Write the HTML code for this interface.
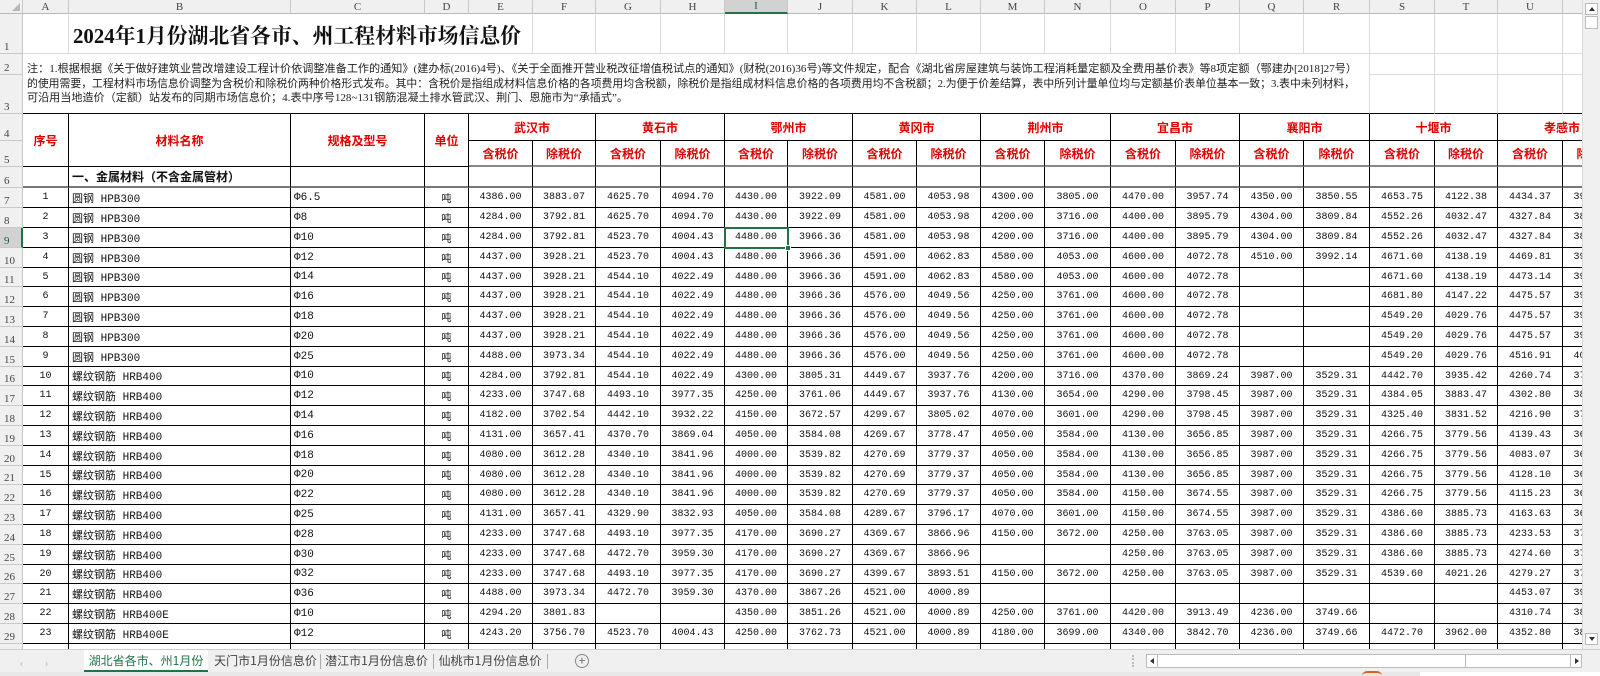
<!DOCTYPE html>
<html><head><meta charset="utf-8"><style>
*{margin:0;padding:0;box-sizing:border-box}
body{width:1600px;height:676px;overflow:hidden;background:#fff;position:relative;font-family:"Liberation Mono","Noto Sans CJK SC",monospace}
#grid{position:absolute;left:0;top:0;width:1582px;height:649px;overflow:hidden}
table{border-collapse:separate;border-spacing:0;table-layout:fixed;width:1627px}
td{border-right:1px solid #000;border-bottom:1px solid #000;font-size:10px;text-align:center;white-space:nowrap;overflow:hidden;color:#111;padding:0;vertical-align:middle}
td.h{background:#f0f0f0;border-right:1px solid #c8c8c8;border-bottom:1px solid #c8c8c8;color:#444;font-family:"Liberation Serif","Noto Serif CJK SC",serif;font-size:11px;vertical-align:bottom;text-align:left;padding-left:4px}
tr.ch td{background:#f0f0f0;border-right:1px solid #c8c8c8;border-bottom:1px solid #b8b8b8;color:#444;font-family:"Liberation Serif",serif;font-size:11px;text-align:center;vertical-align:middle;padding:0}
tr.ch td.sel{background:#d2d2d2;color:#1e5e36;border-bottom:2px solid #217346}
td.hs{background:#d2d2d2;color:#1e5e36;border-right:2px solid #217346}
tr.g td{border-right:1px solid #dadada;border-bottom:1px solid #dadada}
tr.g3 td{border-bottom:1px solid #000}
tr.g3 td.h{border-bottom:1px solid #c8c8c8}
tr.g td.h{border-right:1px solid #c8c8c8;border-bottom:1px solid #c8c8c8}
td.rd{color:#e00000;font-weight:bold;font-size:12px;font-family:"Noto Sans CJK SC",sans-serif}
td.l{text-align:left;padding-left:3px;font-size:11px}
tr.s6 td{border-bottom:2px solid #777}
tr.s5 td{border-bottom:2px solid #888}
tr.s5 td.h,tr.s6 td.h{border-bottom:1px solid #c8c8c8}
#vs{position:absolute;left:1582px;top:0;width:18px;height:649px;background:#f0f0f0;border-left:1px solid #d8d8d8}
#tabs{position:absolute;left:0;top:649px;width:1600px;height:23px;background:#f0f0f0;border-top:1px solid #cfcfcf;font-family:"Noto Sans CJK SC",sans-serif;font-size:12px;color:#444}
.tab{position:absolute;top:0;height:22px;line-height:21px;text-align:center}
.sep{position:absolute;top:4px;width:1px;height:15px;background:#aaa}
</style></head><body>
<div id="grid">
<table>
<colgroup><col style="width:23px"><col style="width:46px"><col style="width:222px"><col style="width:134px"><col style="width:44px"><col style="width:64px"><col style="width:63px"><col style="width:65px"><col style="width:64px"><col style="width:63px"><col style="width:65px"><col style="width:64px"><col style="width:64px"><col style="width:64px"><col style="width:66px"><col style="width:65px"><col style="width:64px"><col style="width:64px"><col style="width:66px"><col style="width:65px"><col style="width:63px"><col style="width:65px"><col style="width:64px"></colgroup>
<tr class="ch" style="height:14px"><td style="position:relative"><span style="position:absolute;right:2px;bottom:2px;width:0;height:0;border-left:8px solid transparent;border-bottom:8px solid #b8b8b8"></span></td><td>A</td><td>B</td><td>C</td><td>D</td><td>E</td><td>F</td><td>G</td><td>H</td><td class="sel">I</td><td>J</td><td>K</td><td>L</td><td>M</td><td>N</td><td>O</td><td>P</td><td>Q</td><td>R</td><td>S</td><td>T</td><td>U</td><td>V</td></tr>
<tr class="g" style="height:40px"><td class="h">1</td><td></td><td colspan="4"></td><td></td><td></td><td></td><td></td><td></td><td></td><td></td><td></td><td></td><td></td><td></td><td></td><td></td><td></td><td></td><td></td><td></td></tr>
<tr class="g" style="height:21px"><td class="h">2</td><td colspan="18" rowspan="2" style="border-bottom:1px solid #000"></td><td></td><td></td><td></td><td></td></tr>
<tr class="g g3" style="height:39px"><td class="h">3</td><td></td><td></td><td></td><td></td></tr>
<tr style="height:27px"><td class="h">4</td><td class="rd" rowspan="2">序号</td><td class="rd" rowspan="2">材料名称</td><td class="rd" rowspan="2">规格及型号</td><td class="rd" rowspan="2">单位</td><td class="rd" colspan="2">武汉市</td><td class="rd" colspan="2">黄石市</td><td class="rd" colspan="2">鄂州市</td><td class="rd" colspan="2">黄冈市</td><td class="rd" colspan="2">荆州市</td><td class="rd" colspan="2">宜昌市</td><td class="rd" colspan="2">襄阳市</td><td class="rd" colspan="2">十堰市</td><td class="rd" colspan="2">孝感市</td></tr>
<tr class="s5" style="height:26px"><td class="h">5</td><td class="rd">含税价</td><td class="rd">除税价</td><td class="rd">含税价</td><td class="rd">除税价</td><td class="rd">含税价</td><td class="rd">除税价</td><td class="rd">含税价</td><td class="rd">除税价</td><td class="rd">含税价</td><td class="rd">除税价</td><td class="rd">含税价</td><td class="rd">除税价</td><td class="rd">含税价</td><td class="rd">除税价</td><td class="rd">含税价</td><td class="rd">除税价</td><td class="rd">含税价</td><td class="rd">除税价</td></tr>
<tr class="s6" style="height:21px"><td class="h">6</td><td></td><td class="l" style="font-weight:bold;font-family:'Noto Sans CJK SC',sans-serif;font-size:12px">一、金属材料（不含金属管材）</td><td></td><td></td><td></td><td></td><td></td><td></td><td></td><td></td><td></td><td></td><td></td><td></td><td></td><td></td><td></td><td></td><td></td><td></td><td></td><td></td></tr>
<tr style="height:20px"><td class="h">7</td><td>1</td><td class="l">圆钢 HPB300</td><td class="l">Φ6.5</td><td>吨</td><td>4386.00</td><td>3883.07</td><td>4625.70</td><td>4094.70</td><td>4430.00</td><td>3922.09</td><td>4581.00</td><td>4053.98</td><td>4300.00</td><td>3805.00</td><td>4470.00</td><td>3957.74</td><td>4350.00</td><td>3850.55</td><td>4653.75</td><td>4122.38</td><td>4434.37</td><td>3926.00</td></tr>
<tr style="height:20px"><td class="h">8</td><td>2</td><td class="l">圆钢 HPB300</td><td class="l">Φ8</td><td>吨</td><td>4284.00</td><td>3792.81</td><td>4625.70</td><td>4094.70</td><td>4430.00</td><td>3922.09</td><td>4581.00</td><td>4053.98</td><td>4200.00</td><td>3716.00</td><td>4400.00</td><td>3895.79</td><td>4304.00</td><td>3809.84</td><td>4552.26</td><td>4032.47</td><td>4327.84</td><td>3830.00</td></tr>
<tr style="height:20px"><td class="h hs">9</td><td>3</td><td class="l">圆钢 HPB300</td><td class="l">Φ10</td><td>吨</td><td>4284.00</td><td>3792.81</td><td>4523.70</td><td>4004.43</td><td>4480.00</td><td>3966.36</td><td>4581.00</td><td>4053.98</td><td>4200.00</td><td>3716.00</td><td>4400.00</td><td>3895.79</td><td>4304.00</td><td>3809.84</td><td>4552.26</td><td>4032.47</td><td>4327.84</td><td>3830.00</td></tr>
<tr style="height:20px"><td class="h">10</td><td>4</td><td class="l">圆钢 HPB300</td><td class="l">Φ12</td><td>吨</td><td>4437.00</td><td>3928.21</td><td>4523.70</td><td>4004.43</td><td>4480.00</td><td>3966.36</td><td>4591.00</td><td>4062.83</td><td>4580.00</td><td>4053.00</td><td>4600.00</td><td>4072.78</td><td>4510.00</td><td>3992.14</td><td>4671.60</td><td>4138.19</td><td>4469.81</td><td>3955.00</td></tr>
<tr style="height:19px"><td class="h">11</td><td>5</td><td class="l">圆钢 HPB300</td><td class="l">Φ14</td><td>吨</td><td>4437.00</td><td>3928.21</td><td>4544.10</td><td>4022.49</td><td>4480.00</td><td>3966.36</td><td>4591.00</td><td>4062.83</td><td>4580.00</td><td>4053.00</td><td>4600.00</td><td>4072.78</td><td></td><td></td><td>4671.60</td><td>4138.19</td><td>4473.14</td><td>3958.00</td></tr>
<tr style="height:20px"><td class="h">12</td><td>6</td><td class="l">圆钢 HPB300</td><td class="l">Φ16</td><td>吨</td><td>4437.00</td><td>3928.21</td><td>4544.10</td><td>4022.49</td><td>4480.00</td><td>3966.36</td><td>4576.00</td><td>4049.56</td><td>4250.00</td><td>3761.00</td><td>4600.00</td><td>4072.78</td><td></td><td></td><td>4681.80</td><td>4147.22</td><td>4475.57</td><td>3960.00</td></tr>
<tr style="height:20px"><td class="h">13</td><td>7</td><td class="l">圆钢 HPB300</td><td class="l">Φ18</td><td>吨</td><td>4437.00</td><td>3928.21</td><td>4544.10</td><td>4022.49</td><td>4480.00</td><td>3966.36</td><td>4576.00</td><td>4049.56</td><td>4250.00</td><td>3761.00</td><td>4600.00</td><td>4072.78</td><td></td><td></td><td>4549.20</td><td>4029.76</td><td>4475.57</td><td>3960.00</td></tr>
<tr style="height:20px"><td class="h">14</td><td>8</td><td class="l">圆钢 HPB300</td><td class="l">Φ20</td><td>吨</td><td>4437.00</td><td>3928.21</td><td>4544.10</td><td>4022.49</td><td>4480.00</td><td>3966.36</td><td>4576.00</td><td>4049.56</td><td>4250.00</td><td>3761.00</td><td>4600.00</td><td>4072.78</td><td></td><td></td><td>4549.20</td><td>4029.76</td><td>4475.57</td><td>3960.00</td></tr>
<tr style="height:20px"><td class="h">15</td><td>9</td><td class="l">圆钢 HPB300</td><td class="l">Φ25</td><td>吨</td><td>4488.00</td><td>3973.34</td><td>4544.10</td><td>4022.49</td><td>4480.00</td><td>3966.36</td><td>4576.00</td><td>4049.56</td><td>4250.00</td><td>3761.00</td><td>4600.00</td><td>4072.78</td><td></td><td></td><td>4549.20</td><td>4029.76</td><td>4516.91</td><td>4000.00</td></tr>
<tr style="height:19px"><td class="h">16</td><td>10</td><td class="l">螺纹钢筋 HRB400</td><td class="l">Φ10</td><td>吨</td><td>4284.00</td><td>3792.81</td><td>4544.10</td><td>4022.49</td><td>4300.00</td><td>3805.31</td><td>4449.67</td><td>3937.76</td><td>4200.00</td><td>3716.00</td><td>4370.00</td><td>3869.24</td><td>3987.00</td><td>3529.31</td><td>4442.70</td><td>3935.42</td><td>4260.74</td><td>3770.00</td></tr>
<tr style="height:20px"><td class="h">17</td><td>11</td><td class="l">螺纹钢筋 HRB400</td><td class="l">Φ12</td><td>吨</td><td>4233.00</td><td>3747.68</td><td>4493.10</td><td>3977.35</td><td>4250.00</td><td>3761.06</td><td>4449.67</td><td>3937.76</td><td>4130.00</td><td>3654.00</td><td>4290.00</td><td>3798.45</td><td>3987.00</td><td>3529.31</td><td>4384.05</td><td>3883.47</td><td>4302.80</td><td>3808.00</td></tr>
<tr style="height:20px"><td class="h">18</td><td>12</td><td class="l">螺纹钢筋 HRB400</td><td class="l">Φ14</td><td>吨</td><td>4182.00</td><td>3702.54</td><td>4442.10</td><td>3932.22</td><td>4150.00</td><td>3672.57</td><td>4299.67</td><td>3805.02</td><td>4070.00</td><td>3601.00</td><td>4290.00</td><td>3798.45</td><td>3987.00</td><td>3529.31</td><td>4325.40</td><td>3831.52</td><td>4216.90</td><td>3732.00</td></tr>
<tr style="height:20px"><td class="h">19</td><td>13</td><td class="l">螺纹钢筋 HRB400</td><td class="l">Φ16</td><td>吨</td><td>4131.00</td><td>3657.41</td><td>4370.70</td><td>3869.04</td><td>4050.00</td><td>3584.08</td><td>4269.67</td><td>3778.47</td><td>4050.00</td><td>3584.00</td><td>4130.00</td><td>3656.85</td><td>3987.00</td><td>3529.31</td><td>4266.75</td><td>3779.56</td><td>4139.43</td><td>3663.00</td></tr>
<tr style="height:20px"><td class="h">20</td><td>14</td><td class="l">螺纹钢筋 HRB400</td><td class="l">Φ18</td><td>吨</td><td>4080.00</td><td>3612.28</td><td>4340.10</td><td>3841.96</td><td>4000.00</td><td>3539.82</td><td>4270.69</td><td>3779.37</td><td>4050.00</td><td>3584.00</td><td>4130.00</td><td>3656.85</td><td>3987.00</td><td>3529.31</td><td>4266.75</td><td>3779.56</td><td>4083.07</td><td>3613.00</td></tr>
<tr style="height:19px"><td class="h">21</td><td>15</td><td class="l">螺纹钢筋 HRB400</td><td class="l">Φ20</td><td>吨</td><td>4080.00</td><td>3612.28</td><td>4340.10</td><td>3841.96</td><td>4000.00</td><td>3539.82</td><td>4270.69</td><td>3779.37</td><td>4050.00</td><td>3584.00</td><td>4130.00</td><td>3656.85</td><td>3987.00</td><td>3529.31</td><td>4266.75</td><td>3779.56</td><td>4128.10</td><td>3653.00</td></tr>
<tr style="height:20px"><td class="h">22</td><td>16</td><td class="l">螺纹钢筋 HRB400</td><td class="l">Φ22</td><td>吨</td><td>4080.00</td><td>3612.28</td><td>4340.10</td><td>3841.96</td><td>4000.00</td><td>3539.82</td><td>4270.69</td><td>3779.37</td><td>4050.00</td><td>3584.00</td><td>4150.00</td><td>3674.55</td><td>3987.00</td><td>3529.31</td><td>4266.75</td><td>3779.56</td><td>4115.23</td><td>3642.00</td></tr>
<tr style="height:20px"><td class="h">23</td><td>17</td><td class="l">螺纹钢筋 HRB400</td><td class="l">Φ25</td><td>吨</td><td>4131.00</td><td>3657.41</td><td>4329.90</td><td>3832.93</td><td>4050.00</td><td>3584.08</td><td>4289.67</td><td>3796.17</td><td>4070.00</td><td>3601.00</td><td>4150.00</td><td>3674.55</td><td>3987.00</td><td>3529.31</td><td>4386.60</td><td>3885.73</td><td>4163.63</td><td>3684.00</td></tr>
<tr style="height:20px"><td class="h">24</td><td>18</td><td class="l">螺纹钢筋 HRB400</td><td class="l">Φ28</td><td>吨</td><td>4233.00</td><td>3747.68</td><td>4493.10</td><td>3977.35</td><td>4170.00</td><td>3690.27</td><td>4369.67</td><td>3866.96</td><td>4150.00</td><td>3672.00</td><td>4250.00</td><td>3763.05</td><td>3987.00</td><td>3529.31</td><td>4386.60</td><td>3885.73</td><td>4233.53</td><td>3746.00</td></tr>
<tr style="height:20px"><td class="h">25</td><td>19</td><td class="l">螺纹钢筋 HRB400</td><td class="l">Φ30</td><td>吨</td><td>4233.00</td><td>3747.68</td><td>4472.70</td><td>3959.30</td><td>4170.00</td><td>3690.27</td><td>4369.67</td><td>3866.96</td><td></td><td></td><td>4250.00</td><td>3763.05</td><td>3987.00</td><td>3529.31</td><td>4386.60</td><td>3885.73</td><td>4274.60</td><td>3783.00</td></tr>
<tr style="height:19px"><td class="h">26</td><td>20</td><td class="l">螺纹钢筋 HRB400</td><td class="l">Φ32</td><td>吨</td><td>4233.00</td><td>3747.68</td><td>4493.10</td><td>3977.35</td><td>4170.00</td><td>3690.27</td><td>4399.67</td><td>3893.51</td><td>4150.00</td><td>3672.00</td><td>4250.00</td><td>3763.05</td><td>3987.00</td><td>3529.31</td><td>4539.60</td><td>4021.26</td><td>4279.27</td><td>3787.00</td></tr>
<tr style="height:20px"><td class="h">27</td><td>21</td><td class="l">螺纹钢筋 HRB400</td><td class="l">Φ36</td><td>吨</td><td>4488.00</td><td>3973.34</td><td>4472.70</td><td>3959.30</td><td>4370.00</td><td>3867.26</td><td>4521.00</td><td>4000.89</td><td></td><td></td><td></td><td></td><td></td><td></td><td></td><td></td><td>4453.07</td><td>3941.00</td></tr>
<tr style="height:20px"><td class="h">28</td><td>22</td><td class="l">螺纹钢筋 HRB400E</td><td class="l">Φ10</td><td>吨</td><td>4294.20</td><td>3801.83</td><td></td><td></td><td>4350.00</td><td>3851.26</td><td>4521.00</td><td>4000.89</td><td>4250.00</td><td>3761.00</td><td>4420.00</td><td>3913.49</td><td>4236.00</td><td>3749.66</td><td></td><td></td><td>4310.74</td><td>3815.00</td></tr>
<tr style="height:20px"><td class="h">29</td><td>23</td><td class="l">螺纹钢筋 HRB400E</td><td class="l">Φ12</td><td>吨</td><td>4243.20</td><td>3756.70</td><td>4523.70</td><td>4004.43</td><td>4250.00</td><td>3762.73</td><td>4521.00</td><td>4000.89</td><td>4180.00</td><td>3699.00</td><td>4340.00</td><td>3842.70</td><td>4236.00</td><td>3749.66</td><td>4472.70</td><td>3962.00</td><td>4352.80</td><td>3852.00</td></tr>
<tr style="height:20px"><td class="h">30</td><td></td><td></td><td></td><td></td><td></td><td></td><td></td><td></td><td></td><td></td><td></td><td></td><td></td><td></td><td></td><td></td><td></td><td></td><td></td><td></td><td></td><td></td></tr>
</table>
<svg style="position:absolute;left:0;top:0" width="1582" height="120">
<text x="73" y="43" textLength="448" lengthAdjust="spacingAndGlyphs" font-family="Liberation Serif, Noto Serif CJK SC, serif" font-weight="bold" font-size="21" fill="#111">2024年1月份湖北省各市、州工程材料市场信息价</text>
<text x="27" y="72" textLength="1330" lengthAdjust="spacingAndGlyphs" font-family="Liberation Serif, Noto Sans CJK SC, sans-serif" font-size="11" fill="#222">注：1.根据根据《关于做好建筑业营改增建设工程计价依调整准备工作的通知》(建办标(2016)4号)、《关于全面推开营业税改征增值税试点的通知》(财税(2016)36号)等文件规定，配合《湖北省房屋建筑与装饰工程消耗量定额及全费用基价表》等8项定额（鄂建办[2018]27号）</text>
<text x="27" y="87" textLength="1328" lengthAdjust="spacingAndGlyphs" font-family="Liberation Serif, Noto Sans CJK SC, sans-serif" font-size="11" fill="#222">的使用需要，工程材料市场信息价调整为含税价和除税价两种价格形式发布。其中：含税价是指组成材料信息价格的各项费用均含税额，除税价是指组成材料信息价格的各项费用均不含税额；2.为便于价差结算，表中所列计量单位均与定额基价表单位基本一致；3.表中未列材料，</text>
<text x="27" y="101" textLength="601" lengthAdjust="spacingAndGlyphs" font-family="Liberation Serif, Noto Sans CJK SC, sans-serif" font-size="11" fill="#222">可沿用当地造价（定额）站发布的同期市场信息价；4.表中序号128~131钢筋混凝土排水管武汉、荆门、恩施市为“承插式”。</text>
</svg>
<div style="position:absolute;left:724px;top:227px;width:65px;height:22px;border:2px solid #217346"></div>
<div style="position:absolute;left:785px;top:245px;width:6px;height:6px;background:#217346;border:1px solid #fff"></div>
</div>
<div id="vs">
<div style="position:absolute;left:2px;top:3px;width:13px;height:12px;background:#fff;border:1px solid #bbb"><div style="margin:3px auto 0;width:0;height:0;border-left:3px solid transparent;border-right:3px solid transparent;border-bottom:4px solid #333"></div></div>
<div style="position:absolute;left:2px;top:16px;width:13px;height:13px;background:#fff;border:1px solid #bbb"></div>
<div style="position:absolute;left:2px;top:633px;width:13px;height:12px;background:#fff;border:1px solid #bbb"><div style="margin:3px auto 0;width:0;height:0;border-left:3px solid transparent;border-right:3px solid transparent;border-top:4px solid #333"></div></div>
</div>
<div id="tabs">
<div style="position:absolute;left:20px;top:5px;color:#aaa;font-size:10px">‹</div>
<div style="position:absolute;left:45px;top:5px;color:#aaa;font-size:10px">›</div>
<div class="tab" style="left:84px;width:124px;background:#fff;color:#217346;border-bottom:2px solid #217346">湖北省各市、州1月份</div>
<div class="tab" style="left:212px;width:107px">天门市1月份信息价</div>
<div class="sep" style="left:320px"></div>
<div class="tab" style="left:322px;width:109px">潜江市1月份信息价</div>
<div class="sep" style="left:433px"></div>
<div class="tab" style="left:435px;width:110px">仙桃市1月份信息价</div>
<div class="sep" style="left:547px"></div>
<div style="position:absolute;left:575px;top:4px;width:14px;height:14px;border:1px solid #888;border-radius:50%;font-size:12px;line-height:12px;text-align:center;color:#666">+</div>
<div style="position:absolute;left:1132px;top:5px;width:2px;height:12px;border-left:2px dotted #bbb"></div>
<div style="position:absolute;left:1146px;top:4px;width:436px;height:14px;background:#fff;border:1px solid #bbb"></div>
<div style="position:absolute;left:1147px;top:5px;width:11px;height:12px;border-right:1px solid #bbb"><div style="margin:3px 0 0 3px;width:0;height:0;border-top:3px solid transparent;border-bottom:3px solid transparent;border-right:4px solid #333"></div></div>
<div style="position:absolute;left:1465px;top:5px;width:1px;height:12px;background:#bbb"></div>
<div style="position:absolute;left:1570px;top:5px;width:11px;height:12px;border-left:1px solid #bbb"><div style="margin:3px 0 0 4px;width:0;height:0;border-top:3px solid transparent;border-bottom:3px solid transparent;border-left:4px solid #333"></div></div>
</div>
<div style="position:absolute;left:0;top:672px;width:1600px;height:4px;background:#e8e8e8"></div>
<div style="position:absolute;left:1362px;top:671px;width:20px;height:5px;border-top:2px solid #e0602a;border-radius:6px 6px 0 0"></div>
<div style="position:absolute;left:1420px;top:672px;width:180px;height:4px;background:#fff"></div>
</body></html>
